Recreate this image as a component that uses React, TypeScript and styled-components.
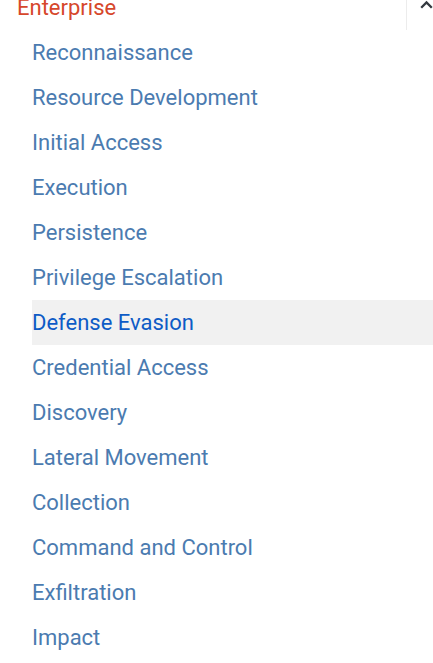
import React from "react";
import styled, { createGlobalStyle } from "styled-components";

const Global = createGlobalStyle`
  html, body { margin: 0; padding: 0; background: #fff; overflow: hidden; }
  body { font-family: Roboto, "Liberation Sans", sans-serif; }
`;

const Nav = styled.nav`
  width: 433px;
  height: 663px;
  overflow: hidden;
`;

const Scroller = styled.div`
  margin-top: -15px;
`;

const Header = styled.div`
  display: flex;
  align-items: stretch;
  height: 45px;
`;

const HeaderLink = styled.a`
  flex: 1;
  padding-left: 17px;
  font-size: 22px;
  line-height: 45px;
  color: #d6472b;
  text-decoration: none;
`;

const Toggle = styled.button`
  width: 27px;
  flex: none;
  border: none;
  border-left: 1px solid #ececec;
  background: transparent;
  padding: 15px 0 0 13px;
  display: flex;
  align-items: flex-start;
  justify-content: flex-start;
`;

const List = styled.ul`
  list-style: none;
  margin: 0;
  padding: 0 0 0 32px;
`;

const Item = styled.li<{ $active?: boolean }>`
  height: 45px;
  background: ${(p) => (p.$active ? "#f1f1f1" : "transparent")};
`;

const ItemLink = styled.a<{ $active?: boolean }>`
  display: block;
  font-size: 22px;
  line-height: 45px;
  color: ${(p) => (p.$active ? "#0d5bc6" : "#4b7bb0")};
  text-decoration: none;
  white-space: nowrap;
`;

const tactics = [
  "Reconnaissance",
  "Resource Development",
  "Initial Access",
  "Execution",
  "Persistence",
  "Privilege Escalation",
  "Defense Evasion",
  "Credential Access",
  "Discovery",
  "Lateral Movement",
  "Collection",
  "Command and Control",
  "Exfiltration",
  "Impact",
];

export default function App() {
  return (
    <>
      <Global />
      <Nav>
        <Scroller>
          <Header>
            <HeaderLink>Enterprise</HeaderLink>
            <Toggle aria-label="collapse">
              <svg width="13" height="9" viewBox="0 0 13 9">
                <path
                  d="M1.2 7.8 L6.5 2.4 L11.8 7.8"
                  fill="none"
                  stroke="#33393f"
                  strokeWidth="2.3"
                />
              </svg>
            </Toggle>
          </Header>
          <List>
            {tactics.map((t) => (
              <Item key={t} $active={t === "Defense Evasion"}>
                <ItemLink $active={t === "Defense Evasion"}>{t}</ItemLink>
              </Item>
            ))}
          </List>
        </Scroller>
      </Nav>
    </>
  );
}
